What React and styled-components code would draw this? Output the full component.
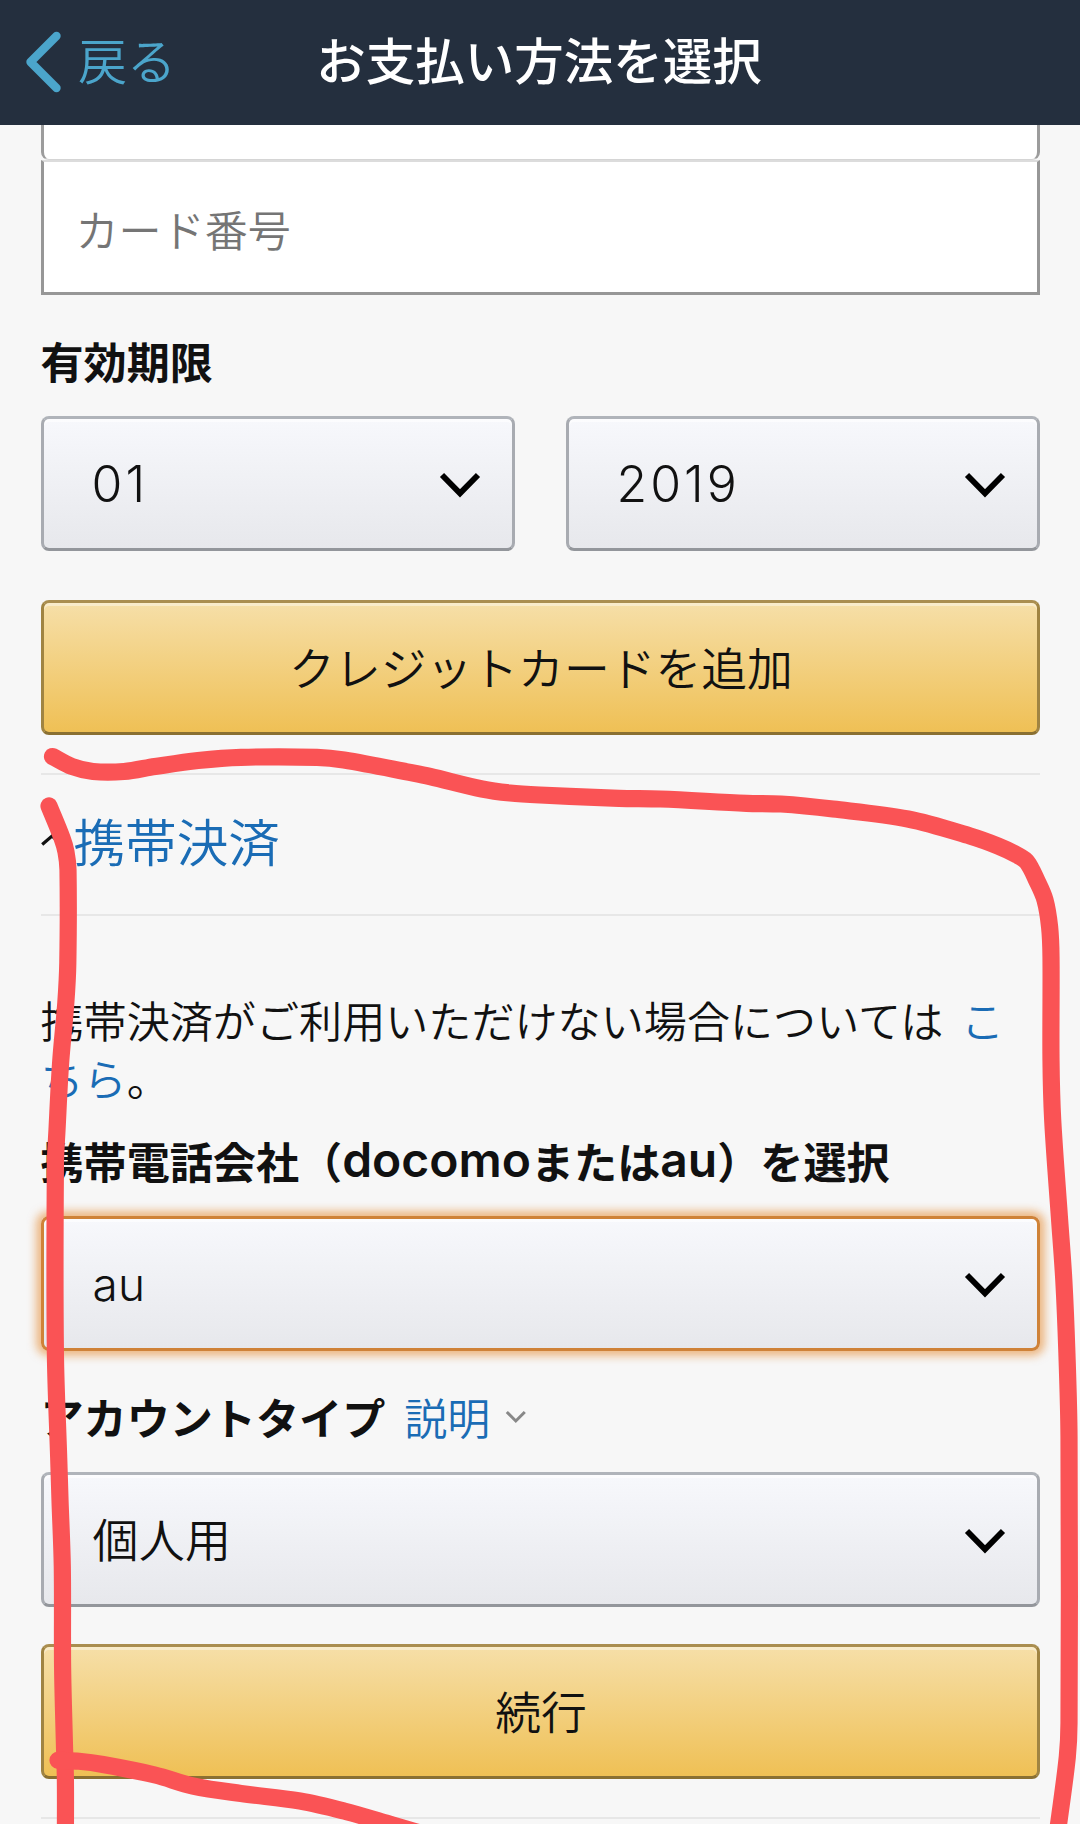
import React from "react";
import styled, { createGlobalStyle, css } from "styled-components";

// every stroke is a list of [x, y] points on the 1080 x 1824 page
const strokes = [
  [
    [52.5, 756.5], [72, 766.5], [93, 771.5], [124, 771.5], [155, 766.5],
    [198, 760.5], [241, 757.3], [317, 757.3], [344, 760], [413, 773],
    [430, 776.5], [482, 789], [510, 793], [540, 795], [619, 798.3],
    [660.5, 799], [746.6, 803.3], [781, 804], [833, 809], [908, 819],
    [970, 836], [998, 846], [1017, 855], [1027, 862], [1037, 881],
    [1045, 900], [1049.6, 927], [1051, 957], [1051, 1060], [1052.7, 1120],
    [1059.4, 1217], [1063.8, 1280], [1066.9, 1353], [1069, 1437],
    [1069, 1723], [1067.3, 1757], [1058.6, 1824], [1056, 1842]
  ],
  [
    [49, 806], [62, 838], [66, 852], [68, 870], [67.8, 963], [65.8, 1003],
    [60.6, 1063], [57, 1130], [55.4, 1165], [55.4, 1353], [58.7, 1458],
    [60, 1500], [62.3, 1567], [62.6, 1667], [64.4, 1743], [65.4, 1780],
    [65.4, 1842]
  ],
  [
    [58, 1760.3], [79, 1761.3], [103, 1764.5], [155, 1775], [193, 1786],
    [241, 1793.5], [300, 1801], [344, 1811], [386, 1823], [430, 1836]
  ]
];

// smooth curve through all the points
const toPath = (pts) => {
  let d = `M${pts[0][0]} ${pts[0][1]}`;
  for (let i = 0; i < pts.length - 1; i++) {
    const p0 = pts[i - 1] || pts[i];
    const p1 = pts[i];
    const p2 = pts[i + 1];
    const p3 = pts[i + 2] || p2;
    const len = Math.hypot(p2[0] - p1[0], p2[1] - p1[1]);
    const before = Math.hypot(p2[0] - p0[0], p2[1] - p0[1]) || 1;
    const after = Math.hypot(p3[0] - p1[0], p3[1] - p1[1]) || 1;
    const a = len / 3 / before;
    const b = len / 3 / after;
    d += ` C${p1[0] + (p2[0] - p0[0]) * a} ${p1[1] + (p2[1] - p0[1]) * a}`;
    d += ` ${p2[0] - (p3[0] - p1[0]) * b} ${p2[1] - (p3[1] - p1[1]) * b}`;
    d += ` ${p2[0]} ${p2[1]}`;
  }
  return d;
};

function Select({ children, focused, numeric }) {
  return (
    <StyledSelect $focused={focused}>
      <SelectValue $numeric={numeric}>{children}</SelectValue>
      <svg width="42" height="28" viewBox="0 0 42 28">
        <path
          d="M3 5 L21 23.4 L39 5"
          fill="none"
          stroke="#000"
          strokeWidth="5.8"
        />
      </svg>
    </StyledSelect>
  );
}

export default function App() {
  return (
    <Page>
      <GlobalStyle />
      <Header>
        <BackButton>
          <svg width="38" height="64" viewBox="0 0 38 64">
            <path
              d="M31.5 6 L5.5 32 L31.5 58"
              fill="none"
              stroke="#4ba5cb"
              strokeWidth="8.4"
              strokeLinecap="round"
              strokeLinejoin="round"
            />
          </svg>
          <BackText>戻る</BackText>
        </BackButton>
        <Title>お支払い方法を選択</Title>
      </Header>
      <Content>
        <NameField />
        <CardField>カード番号</CardField>
        <Label>有効期限</Label>
        <DateRow>
          <Select numeric>01</Select>
          <Select numeric>2019</Select>
        </DateRow>
        <GoldButton $gap={49}>クレジットカードを追加</GoldButton>
        <Divider $gap={38} />
        <Expander>
          <svg width="24" height="14" viewBox="0 0 24 14">
            <path
              d="M1.2 11.5 L11 3 L20.8 11.5"
              fill="none"
              stroke="#111"
              strokeWidth="3.2"
            />
          </svg>
          携帯決済
        </Expander>
        <Divider />
        <Note>
          携帯決済がご利用いただけない場合については <a>こちら</a>。
        </Note>
        <Label $tight>
          携帯電話会社（<Latin>docomo</Latin>または<Latin>au</Latin>）を選択
        </Label>
        <Select focused>au</Select>
        <Label>
          アカウントタイプ
          <HelpLink>
            説明
            <svg width="22" height="15" viewBox="0 0 22 15">
              <path
                d="M1.8 3 L10.8 12 L19.8 3"
                fill="none"
                stroke="#888"
                strokeWidth="3"
              />
            </svg>
          </HelpLink>
        </Label>
        <Select>個人用</Select>
        <GoldButton $gap={37}>続行</GoldButton>
        <Divider $gap={38} />
      </Content>
      <Marker viewBox="0 0 1080 1824">
        {strokes.map((pts, i) => (
          <path key={i} d={toPath(pts)} />
        ))}
      </Marker>
    </Page>
  );
}

const GlobalStyle = createGlobalStyle`
  * {
    box-sizing: border-box;
  }

  body {
    margin: 0;
    background: #f7f7f7;
  }
`;

const Page = styled.div`
  position: relative;
  width: 1080px;
  height: 1824px;
  overflow: hidden;
  background: #f7f7f7;
  color: #111;
  font-family: "Noto Sans CJK JP", sans-serif;
  font-weight: 350;
  font-size: 43.1px;
  line-height: 58px;
  white-space: nowrap;

  svg {
    flex: none;
  }
`;

const Header = styled.header`
  display: grid;
  grid-template-columns: 1fr auto 1fr;
  align-items: center;
  height: 125px;
  padding: 0 27px 6px 25px;
  background: #242f3e;
  font-size: 49px;
`;

const BackButton = styled.div`
  display: flex;
  align-items: center;
  gap: 15px;
  padding-top: 4px;
  color: #4ba5cb;
`;

const BackText = styled.span`
  padding-bottom: 6px;
`;

const Title = styled.h1`
  margin: 0;
  padding-bottom: 1px;
  font-size: 49.5px;
  line-height: 58px;
  font-weight: 500;
  color: #fff;
`;

const Content = styled.main`
  display: flex;
  flex-direction: column;
  padding: 0 40.5px;
`;

const NameField = styled.div`
  height: 35px;
  background: #fff;
  border: 3px solid #9c9c9c;
  border-top: 0;
  border-bottom: 1px solid #d5d5d5;
  border-radius: 0 0 8px 8px;
`;

const CardField = styled.div`
  display: flex;
  align-items: center;
  height: 135px;
  padding: 2px 0 0 32px;
  background: #fff;
  border: 3px solid #979797;
  border-top: 2px solid #dcdcdc;
  color: #757575;
`;

const Label = styled.div`
  display: flex;
  align-items: center;
  height: 58px;
  margin: 36px 0 27px;
  font-weight: 700;

  ${({ $tight }) =>
    $tight &&
    css`
      margin: 35px 0 27px;
    `}
`;

const Latin = styled.span`
  font-family: Inter, sans-serif;
  font-size: 48px;
  font-weight: 600;
`;

const HelpLink = styled.a`
  display: flex;
  align-items: center;
  gap: 15px;
  margin-left: 19px;
  font-size: 43px;
  font-weight: 350;
  color: #1a6cb5;
`;

const DateRow = styled.div`
  display: grid;
  grid-template-columns: 1fr 1fr;
  gap: 51px;
`;

const StyledSelect = styled.div`
  display: flex;
  align-items: center;
  justify-content: space-between;
  height: 135px;
  padding: 0 31px 0 49px;
  border: 3px solid;
  border-color: #b0b4ba #a8abb1 #93969b;
  border-radius: 8px;
  background: linear-gradient(#f7f8fc, #e7e8ec);
  box-shadow: inset 0 3px 0 rgba(255, 255, 255, 0.6);

  ${({ $focused }) =>
    $focused &&
    css`
      border-color: #cf8238;
      box-shadow: 0 0 8px 5px rgba(228, 121, 17, 0.5),
        inset 0 3px 0 rgba(255, 255, 255, 0.6);
    `}
`;

const SelectValue = styled.span`
  font-family: Inter, "Noto Sans CJK JP", sans-serif;
  font-size: 46px;
  letter-spacing: 0.3px;

  ${({ $numeric }) =>
    $numeric &&
    css`
      margin-left: -1px;
      padding-top: 1px;
      font-size: 50px;
      letter-spacing: 3px;
    `}
`;

const GoldButton = styled.div`
  display: flex;
  align-items: center;
  justify-content: center;
  height: 135px;
  margin-top: ${({ $gap }) => $gap}px;
  padding: 0 0 4px 2px;
  border: 3px solid;
  border-color: #aa8e50 #a08442 #8a7032;
  border-radius: 8px;
  background: linear-gradient(#f6dfa8, #efc055);
  box-shadow: inset 0 3px 0 rgba(255, 255, 255, 0.4);
  font-size: 45.8px;
`;

const Divider = styled.div`
  height: 2px;
  margin-top: ${({ $gap }) => $gap || 0}px;
  background: #e7e7e7;
`;

const Expander = styled.div`
  display: flex;
  align-items: center;
  gap: 9px;
  height: 139px;
  padding-bottom: 10px;
  font-size: 51.6px;
  color: #1a6cb5;
`;

const Note = styled.p`
  margin: 74px 0 -10px;
  white-space: normal;
  word-spacing: 8px;

  a {
    color: #1a6cb5;
  }
`;

const Marker = styled.svg`
  position: absolute;
  top: 0;
  left: 0;
  width: 1080px;
  height: 1824px;
  pointer-events: none;

  path {
    fill: none;
    stroke: #fa5355;
    stroke-width: 17.2px;
    stroke-linecap: round;
    stroke-linejoin: round;
  }
`;
